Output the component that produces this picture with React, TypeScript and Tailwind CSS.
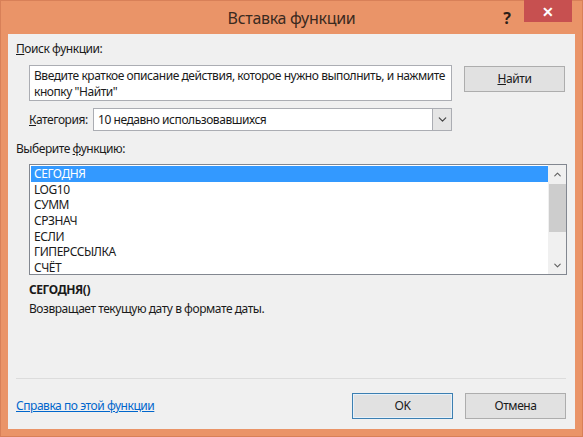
import { ChevronDown, ChevronUp } from "lucide-react";

const FONT = { fontFamily: '"Segoe UI", "Noto Sans", "Open Sans", sans-serif' };

const functions = ["СЕГОДНЯ", "LOG10", "СУММ", "СРЗНАЧ", "ЕСЛИ", "ГИПЕРССЫЛКА", "СЧЁТ"];

function DialogButton({ children, primary }: { children: React.ReactNode; primary?: boolean }) {
  return (
    <button
      type="button"
      className={
        "flex h-[26px] w-[101px] items-center justify-center border bg-[#e1e1e1] text-[12px] tracking-[-0.4px] text-[#1a1a1a] " +
        (primary ? "border-[#3c7fb1] shadow-[inset_0_0_0_1px_#e5f1fb]" : "border-[#adadad]")
      }
    >
      {children}
    </button>
  );
}

export default function App() {
  return (
    <div
      style={FONT}
      className="flex h-[437px] w-[583px] flex-col border border-[#d88058] bg-[#ea9468] px-[7px] pb-[7px]"
    >
      {/* title bar */}
      <div className="relative flex h-[33px] shrink-0 items-center justify-center">
        <span className="text-[16px] tracking-[-0.3px] text-[#3a2a20]">Вставка функции</span>
        <span className="absolute right-[64px] top-[5px] text-[16px] font-bold text-[#2a1e18]">?</span>
        <div className="absolute right-[3px] top-[-1px] flex h-[22px] w-[48px] items-center justify-center bg-[#c75050] text-[14px] font-bold text-white">
          ✕
        </div>
      </div>

      {/* client area */}
      <div className="flex flex-1 flex-col bg-[#f0f0f0] pl-[8px] pr-[9px] text-[12px] tracking-[-0.45px] text-[#1a1a1a]">
        <div className="mt-[7px] h-[16px] leading-[16px]">
          <span className="underline">П</span>оиск функции:
        </div>

        <div className="mt-[8px] flex items-start">
          <div className="ml-[13px] h-[36px] w-[423px] border border-[#abadb3] bg-white px-[4px] pt-[2px] leading-[16px]">
            Введите краткое описание действия, которое нужно выполнить, и нажмите кнопку "Найти"
          </div>
          <div className="ml-[12px] mt-[1px]">
            <DialogButton>
              <span className="underline">Н</span>айти
            </DialogButton>
          </div>
        </div>

        <div className="mt-[7px] flex h-[23px] items-center">
          <span className="ml-[13px] w-[64px]">
            <span className="underline">К</span>атегория:
          </span>
          <div className="flex h-[23px] w-[359px] items-stretch border border-[#abadb3] bg-white">
            <span className="flex-1 pl-[4px] leading-[21px]">10 недавно использовавшихся</span>
            <div className="flex w-[19px] items-center justify-center border-l border-[#abadb3] bg-[#e5e5e5]">
              <ChevronDown size={13} strokeWidth={2.2} className="text-[#444]" />
            </div>
          </div>
        </div>

        <div className="mt-[10px] h-[16px] leading-[16px]">
          Выберите <span className="underline">ф</span>ункцию:
        </div>

        <div className="ml-[13px] mt-[7px] flex h-[111px] w-[538px] border border-[#828790] bg-white">
          <div className="flex-1 pl-[1px] pt-[1px]">
            {functions.map((name, i) => (
              <div
                key={name}
                className={
                  "h-[15.67px] pl-[3px] leading-[15.67px] " +
                  (i === 0 ? "bg-[#3399ff] text-white" : "")
                }
              >
                {name}
              </div>
            ))}
          </div>
          <div className="flex w-[18px] flex-col items-center bg-[#f0f0f0]">
            <div className="flex h-[19px] items-center justify-center">
              <ChevronUp size={11} strokeWidth={2.4} className="text-[#606060]" />
            </div>
            <div className="h-[48px] w-[17px] bg-[#cdcdcd]" />
            <div className="flex-1" />
            <div className="flex h-[17px] items-center justify-center">
              <ChevronDown size={11} strokeWidth={2.4} className="text-[#606060]" />
            </div>
          </div>
        </div>

        <div className="ml-[13px] mt-[7px] h-[16px] font-bold leading-[16px]">СЕГОДНЯ()</div>
        <div className="ml-[13px] mt-[3px] h-[16px] leading-[16px]">
          Возвращает текущую дату в формате даты.
        </div>

        <div className="mt-[61px] h-px bg-[#dcdcdc]" />

        <div className="mt-[14px] flex items-center">
          <a href="#" className="text-[#0066cc] underline">
            Справка по этой функции
          </a>
          <div className="ml-auto flex gap-[12px]">
            <DialogButton primary>OK</DialogButton>
            <DialogButton>Отмена</DialogButton>
          </div>
        </div>
      </div>
    </div>
  );
}
